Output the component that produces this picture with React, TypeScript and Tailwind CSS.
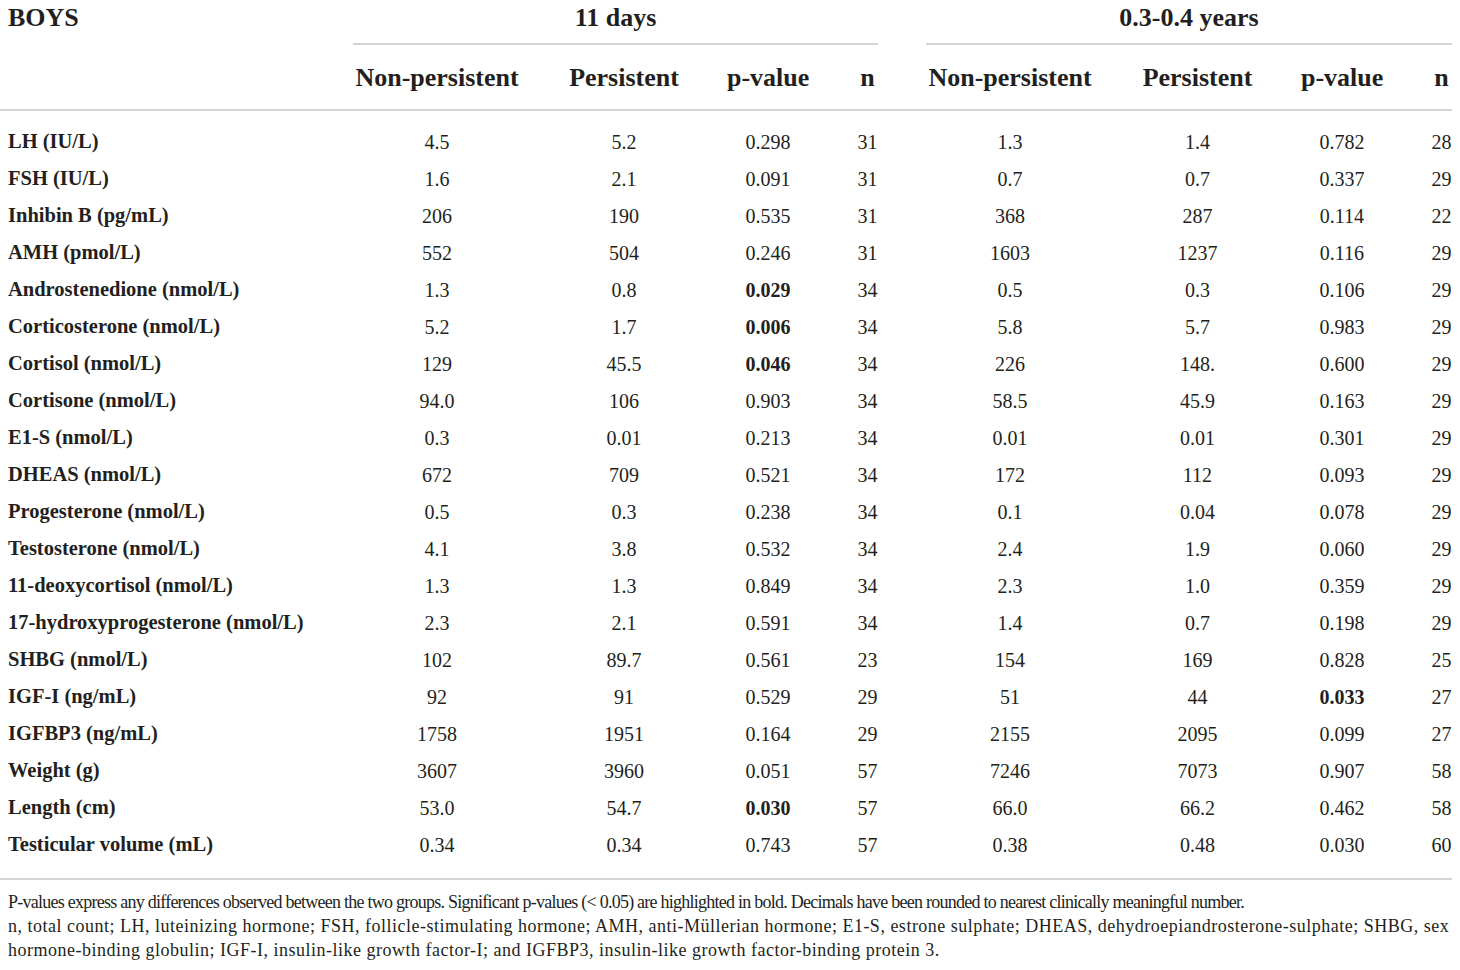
const cols = 'grid grid-cols-[305px_168px_110px_82px_21px_168px_111px_82px_21px] gap-x-12'

type Row = {
    label: string
    a: string[]
    b: string[]
    boldA?: boolean
    boldB?: boolean
}

const rows: Row[] = [
    { label: 'LH (IU/L)', a: ['4.5', '5.2', '0.298', '31'], b: ['1.3', '1.4', '0.782', '28'] },
    { label: 'FSH (IU/L)', a: ['1.6', '2.1', '0.091', '31'], b: ['0.7', '0.7', '0.337', '29'] },
    { label: 'Inhibin B (pg/mL)', a: ['206', '190', '0.535', '31'], b: ['368', '287', '0.114', '22'] },
    { label: 'AMH (pmol/L)', a: ['552', '504', '0.246', '31'], b: ['1603', '1237', '0.116', '29'] },
    { label: 'Androstenedione (nmol/L)', a: ['1.3', '0.8', '0.029', '34'], b: ['0.5', '0.3', '0.106', '29'], boldA: true },
    { label: 'Corticosterone (nmol/L)', a: ['5.2', '1.7', '0.006', '34'], b: ['5.8', '5.7', '0.983', '29'], boldA: true },
    { label: 'Cortisol (nmol/L)', a: ['129', '45.5', '0.046', '34'], b: ['226', '148.', '0.600', '29'], boldA: true },
    { label: 'Cortisone (nmol/L)', a: ['94.0', '106', '0.903', '34'], b: ['58.5', '45.9', '0.163', '29'] },
    { label: 'E1-S (nmol/L)', a: ['0.3', '0.01', '0.213', '34'], b: ['0.01', '0.01', '0.301', '29'] },
    { label: 'DHEAS (nmol/L)', a: ['672', '709', '0.521', '34'], b: ['172', '112', '0.093', '29'] },
    { label: 'Progesterone (nmol/L)', a: ['0.5', '0.3', '0.238', '34'], b: ['0.1', '0.04', '0.078', '29'] },
    { label: 'Testosterone (nmol/L)', a: ['4.1', '3.8', '0.532', '34'], b: ['2.4', '1.9', '0.060', '29'] },
    { label: '11-deoxycortisol (nmol/L)', a: ['1.3', '1.3', '0.849', '34'], b: ['2.3', '1.0', '0.359', '29'] },
    { label: '17-hydroxyprogesterone (nmol/L)', a: ['2.3', '2.1', '0.591', '34'], b: ['1.4', '0.7', '0.198', '29'] },
    { label: 'SHBG (nmol/L)', a: ['102', '89.7', '0.561', '23'], b: ['154', '169', '0.828', '25'] },
    { label: 'IGF-I (ng/mL)', a: ['92', '91', '0.529', '29'], b: ['51', '44', '0.033', '27'], boldB: true },
    { label: 'IGFBP3 (ng/mL)', a: ['1758', '1951', '0.164', '29'], b: ['2155', '2095', '0.099', '27'] },
    { label: 'Weight (g)', a: ['3607', '3960', '0.051', '57'], b: ['7246', '7073', '0.907', '58'] },
    { label: 'Length (cm)', a: ['53.0', '54.7', '0.030', '57'], b: ['66.0', '66.2', '0.462', '58'], boldA: true },
    { label: 'Testicular volume (mL)', a: ['0.34', '0.34', '0.743', '57'], b: ['0.38', '0.48', '0.030', '60'] },
]

const subHeads = ['Non-persistent', 'Persistent', 'p-value', 'n']

function Cells({ values, bold }: { values: string[]; bold?: boolean }) {
    return (
        <>
            {values.map((v, i) => (
                <div key={i} className={`text-center whitespace-nowrap ${i === 2 && bold ? 'font-bold' : ''}`}>
                    {v}
                </div>
            ))}
        </>
    )
}

export default function App() {
    return (
        <div
            className="w-[1460px] min-h-[970px] bg-white text-[#231f20]"
            style={{ fontFamily: '"Liberation Serif", "Times New Roman", serif' }}
        >
            <div className="w-[1452px]">

                {/* ── GROUP HEADERS ── */}
                <div className={`${cols} h-[45px] text-[26px] font-bold leading-[36px]`}>
                    <div className="pl-2">BOYS</div>
                    <div className="col-span-4 h-[45px] text-center border-b-2 border-[#d4d4d4]">11 days</div>
                    <div className="col-span-4 h-[45px] text-center border-b-2 border-[#d4d4d4]">0.3-0.4 years</div>
                </div>

                {/* ── COLUMN HEADERS ── */}
                <div className={`${cols} h-[66px] items-center text-[26px] font-bold border-b-2 border-[#d4d4d4]`}>
                    <div />
                    {[...subHeads, ...subHeads].map((h, i) => (
                        <div key={i} className="text-center whitespace-nowrap">{h}</div>
                    ))}
                </div>

                {/* ── BODY ── */}
                <div className="pt-[12px] pb-[15px] border-b-2 border-[#d4d4d4] text-[20px]">
                    {rows.map(r => (
                        <div key={r.label} className={`${cols} h-[37px] items-center`}>
                            <div className="pl-2 font-bold text-[20.5px] whitespace-nowrap">{r.label}</div>
                            <Cells values={r.a} bold={r.boldA} />
                            <Cells values={r.b} bold={r.boldB} />
                        </div>
                    ))}
                </div>

                {/* ── FOOTNOTE ── */}
                <div className="pl-2 pt-[10px] text-[18px] leading-[24px] whitespace-nowrap">
                    <p className="tracking-[-0.75px]">
                        P-values express any differences observed between the two groups. Significant p-values (&lt; 0.05) are highlighted in bold. Decimals have been rounded to nearest clinically meaningful number.
                    </p>
                    <p className="tracking-[0.5px]">
                        n, total count; LH, luteinizing hormone; FSH, follicle-stimulating hormone; AMH, anti-Müllerian hormone; E1-S, estrone sulphate; DHEAS, dehydroepiandrosterone-sulphate; SHBG, sex
                        <br />
                        hormone-binding globulin; IGF-I, insulin-like growth factor-I; and IGFBP3, insulin-like growth factor-binding protein 3.
                    </p>
                </div>

            </div>
        </div>
    )
}
